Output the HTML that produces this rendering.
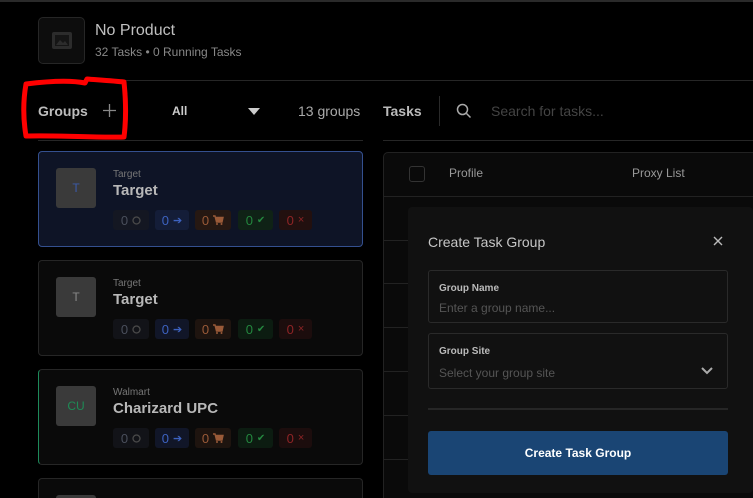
<!DOCTYPE html>
<html style="width:753px;height:498px;overflow:hidden"><head><meta charset="utf-8"><style>
*{box-sizing:border-box;margin:0;padding:0}
body{width:753px;height:498px;background:#000;overflow:hidden;position:relative;font-family:"Liberation Sans",sans-serif;color:#bbb}
.a{position:absolute}
.card{position:absolute;left:38px;width:325px;height:96px;border:1px solid #262626;border-radius:4px;background:#0a0a0a}
.av{position:absolute;left:17px;top:16px;width:40px;height:40px;background:#3a3a3a;border-radius:3px;font-size:12px;display:flex;align-items:center;justify-content:center}
.site{position:absolute;left:74px;top:17px;font-size:10px;color:#777}
.name{position:absolute;left:74px;top:30px;font-size:15px;font-weight:bold;color:#b8b8b8}
.b{position:absolute;top:58px;height:20px;border-radius:3px;font-size:13px;display:flex;align-items:center;justify-content:center;gap:4px}
.row{position:absolute;left:384px;width:369px;height:1px;background:#222}
</style></head><body>
<div class="a" style="left:0;top:0;width:753px;height:2px;background:#2a2a2a"></div>
<div class="a" style="left:38px;top:17px;width:47px;height:47px;border:1px solid #262626;border-radius:5px;background:#0d0d0d">
<svg class="a" style="left:12px;top:12px" width="22" height="22" viewBox="0 0 22 22"><rect x="1" y="2" width="20" height="17" rx="2" fill="#2c2c2c"/><rect x="4" y="5" width="14" height="11" fill="#151515"/><path d="M5 15l4-5 3 3 2-2 3 4z" fill="#2c2c2c"/></svg></div>
<div class="a" style="left:95px;top:22px;font-size:16px;color:#c0c0c0">No Product</div>
<div class="a" style="left:95px;top:45px;font-size:12px;color:#888">32 Tasks • 0 Running Tasks</div>
<div class="a" style="left:38px;top:80px;width:715px;height:1px;background:#262626"></div>
<div class="a" style="left:38px;top:103px;font-size:14px;font-weight:bold;color:#bdbdbd">Groups</div>
<svg class="a" style="left:103px;top:104px" width="13" height="13" viewBox="0 0 13 13"><path d="M6.5 0v13M0 6.5h13" stroke="#888" stroke-width="1.3"/></svg>
<div class="a" style="left:172px;top:104px;font-size:12px;font-weight:bold;color:#ccc">All</div>
<div class="a" style="left:248px;top:108px;width:0;height:0;border-left:6px solid transparent;border-right:6px solid transparent;border-top:7px solid #ccc"></div>
<div class="a" style="left:298px;top:103px;font-size:14px;color:#aaa">13 groups</div>
<div class="a" style="left:383px;top:103px;font-size:14px;font-weight:bold;color:#bbb">Tasks</div>
<div class="a" style="left:439px;top:96px;width:1px;height:30px;background:#2a2a2a"></div>
<svg class="a" style="left:456px;top:103px" width="16" height="16" viewBox="0 0 16 16"><circle cx="6.5" cy="6.5" r="5" fill="none" stroke="#aaa" stroke-width="1.5"/><path d="M10.5 10.5l4 4" stroke="#aaa" stroke-width="1.5"/></svg>
<div class="a" style="left:491px;top:103px;font-size:14px;color:#444">Search for tasks...</div>
<div class="a" style="left:38px;top:140px;width:325px;height:1px;background:#262626"></div>
<div class="a" style="left:383px;top:140px;width:370px;height:1px;background:#262626"></div>
<svg class="a" style="left:20px;top:76px" width="112" height="68" viewBox="0 0 112 68"><path d="M6 8 C30 5 50 4 65 7 L67 3 C80 4 95 5 104 6 C106 25 106 45 104 61 C75 62 40 59 6 60 C3 42 3 25 6 8 Z" fill="none" stroke="#f00" stroke-width="5" stroke-linejoin="round"/></svg>

<svg width="0" height="0" style="position:absolute"><defs>
<g id="cart"><path d="M0 1h2l1.5 6h5.5l1-4.5H3" fill="none" stroke="currentColor" stroke-width="1.4"/><rect x="3" y="3" width="6.5" height="3.5" fill="currentColor"/><circle cx="4" cy="9" r="1" fill="currentColor"/><circle cx="8.5" cy="9" r="1" fill="currentColor"/></g>
</defs></svg>

<div class="card" style="top:151px;background:#0e1426;border-color:#34508f"><div class="av" style="color:#3a5aa8">T</div><div class="site">Target</div><div class="name">Target</div>
<div class="b" style="left:74px;width:36px;background:#141722;color:#4a4f5c">0 <svg width="9" height="9"><circle cx="4.5" cy="4.5" r="3.5" fill="none" stroke="#4a4a4a" stroke-width="1.3"/></svg></div><div class="b" style="left:116px;width:34px;background:#141d38;color:#3d62c0">0 <span style="font-size:11px">➔</span></div><div class="b" style="left:156px;width:36px;background:#261812;color:#9a5a38">0 <svg width="11" height="11" style="color:#9a5a38"><use href="#cart"/></svg></div><div class="b" style="left:199px;width:35px;background:#0f2216;color:#24873f">0 <span style="font-size:10px">✔</span></div><div class="b" style="left:240px;width:33px;background:#22100f;color:#8e2426">0 <span style="font-size:11px">×</span></div></div>

<div class="card" style="top:260px"><div class="av" style="color:#888">T</div><div class="site">Target</div><div class="name">Target</div>
<div class="b" style="left:74px;width:36px;background:#121318;color:#4a4f5c">0 <svg width="9" height="9"><circle cx="4.5" cy="4.5" r="3.5" fill="none" stroke="#4a4a4a" stroke-width="1.3"/></svg></div><div class="b" style="left:116px;width:34px;background:#111628;color:#3d62c0">0 <span style="font-size:11px">➔</span></div><div class="b" style="left:156px;width:36px;background:#1e140f;color:#9a5a38">0 <svg width="11" height="11" style="color:#9a5a38"><use href="#cart"/></svg></div><div class="b" style="left:199px;width:35px;background:#0c1c11;color:#24873f">0 <span style="font-size:10px">✔</span></div><div class="b" style="left:240px;width:33px;background:#1c0d0d;color:#8e2426">0 <span style="font-size:11px">×</span></div></div>

<div class="card" style="top:369px;border-left-color:#1d8a5a"><div class="av" style="color:#1e8a55">CU</div><div class="site">Walmart</div><div class="name">Charizard UPC</div>
<div class="b" style="left:74px;width:36px;background:#121318;color:#4a4f5c">0 <svg width="9" height="9"><circle cx="4.5" cy="4.5" r="3.5" fill="none" stroke="#4a4a4a" stroke-width="1.3"/></svg></div><div class="b" style="left:116px;width:34px;background:#111628;color:#3d62c0">0 <span style="font-size:11px">➔</span></div><div class="b" style="left:156px;width:36px;background:#1e140f;color:#9a5a38">0 <svg width="11" height="11" style="color:#9a5a38"><use href="#cart"/></svg></div><div class="b" style="left:199px;width:35px;background:#0c1c11;color:#24873f">0 <span style="font-size:10px">✔</span></div><div class="b" style="left:240px;width:33px;background:#1c0d0d;color:#8e2426">0 <span style="font-size:11px">×</span></div></div>
<div class="card" style="top:478px;height:20px;border-bottom:none;border-radius:4px 4px 0 0"><div class="av" style="top:16px;height:4px;border-radius:3px 3px 0 0"></div></div>

<div class="a" style="left:383px;top:152px;width:380px;height:346px;border:1px solid #222;border-bottom:none;border-radius:5px 5px 0 0;background:#0a0a0a"></div>
<div class="a" style="left:409px;top:166px;width:16px;height:16px;border:1px solid #333;border-radius:3px"></div>
<div class="a" style="left:449px;top:166px;font-size:12px;color:#999">Profile</div>
<div class="a" style="left:632px;top:166px;font-size:12px;color:#999">Proxy List</div>
<div class="row" style="top:196px"></div><div class="row" style="top:240px"></div><div class="row" style="top:283px"></div><div class="row" style="top:327px"></div><div class="row" style="top:371px"></div><div class="row" style="top:415px"></div><div class="row" style="top:459px"></div>

<div class="a" style="left:408px;top:207px;width:345px;height:286px;background:#111;border-radius:4px"></div>
<div class="a" style="left:428px;top:234px;font-size:14px;color:#c6c6c6">Create Task Group</div>
<svg class="a" style="left:713px;top:236px" width="10" height="10" viewBox="0 0 10 10"><path d="M1 1l8 8M9 1l-8 8" stroke="#bbb" stroke-width="1.4"/></svg>
<div class="a" style="left:428px;top:270px;width:300px;height:53px;border:1px solid #2a2a2a;border-radius:3px"></div>
<div class="a" style="left:439px;top:283px;font-size:10px;font-weight:bold;color:#bbb">Group Name</div>
<div class="a" style="left:439px;top:301px;font-size:12px;color:#555">Enter a group name...</div>
<div class="a" style="left:428px;top:333px;width:300px;height:56px;border:1px solid #2a2a2a;border-radius:3px"></div>
<div class="a" style="left:439px;top:346px;font-size:10px;font-weight:bold;color:#bbb">Group Site</div>
<div class="a" style="left:439px;top:366px;font-size:12px;color:#555">Select your group site</div>
<svg class="a" style="left:700px;top:366px" width="14" height="10" viewBox="0 0 14 10"><path d="M2 2l5 5 5-5" fill="none" stroke="#aaa" stroke-width="2"/></svg>
<div class="a" style="left:428px;top:408px;width:300px;height:2px;background:#262626"></div>
<div class="a" style="left:428px;top:431px;width:300px;height:44px;background:#1a4574;border-radius:3px;color:#fff;font-size:12px;font-weight:bold;display:flex;align-items:center;justify-content:center">Create Task Group</div>
</body></html>
